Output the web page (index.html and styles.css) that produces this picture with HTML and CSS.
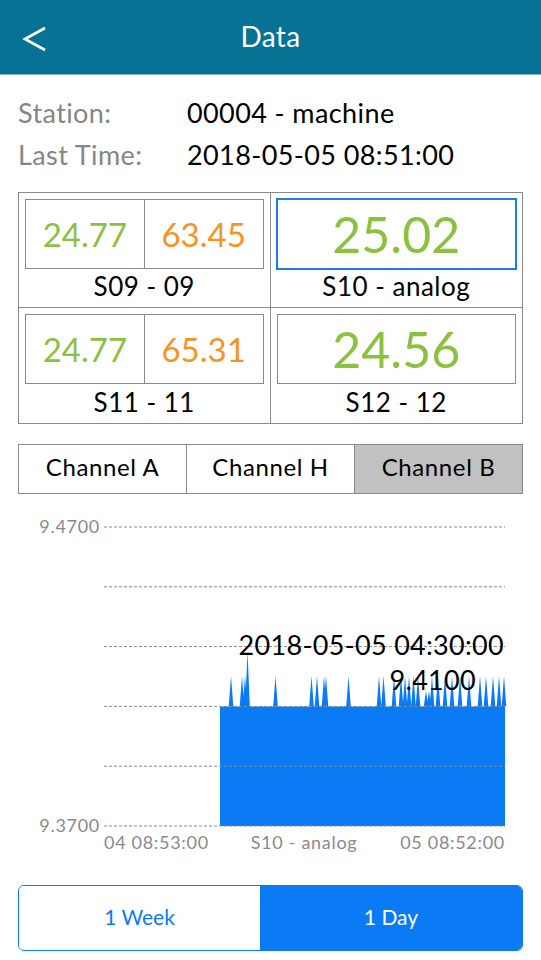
FILE: index.html
```html
<!DOCTYPE html>
<html lang="en">

<head>
    <meta name="viewport" content="width=device-width, initial-scale=1.0">
    <link rel="stylesheet" href="styles.css">
</head>

<body>
    <div class="header">
        <svg class="back" width="26" height="28" viewBox="0 0 26 28">
            <path d="M23 3 L3 14 L23 25" fill="none" stroke="white" stroke-width="2.7" />
        </svg>
        <p class="title">Data</p>
    </div>

    <div class="info">
        <div class="info-row">
            <span class="label">Station:</span>
            <span class="value">00004 - machine</span>
        </div>
        <div class="info-row">
            <span class="label">Last Time:</span>
            <span class="value">2018-05-05 08:51:00</span>
        </div>
    </div>

    <div class="sensors">
        <div class="cell">
            <div class="box split">
                <span class="num green">24.77</span>
                <span class="num orange">63.45</span>
            </div>
            <p class="name">S09 - 09</p>
        </div>
        <div class="cell">
            <div class="box selected">
                <span class="num big green">25.02</span>
            </div>
            <p class="name">S10 - analog</p>
        </div>
        <div class="cell">
            <div class="box split">
                <span class="num green">24.77</span>
                <span class="num orange">65.31</span>
            </div>
            <p class="name">S11 - 11</p>
        </div>
        <div class="cell">
            <div class="box">
                <span class="num big green">24.56</span>
            </div>
            <p class="name">S12 - 12</p>
        </div>
    </div>

    <div class="tabs">
        <button type="button" class="tab">Channel A</button>
        <button type="button" class="tab">Channel H</button>
        <button type="button" class="tab active">Channel B</button>
    </div>

    <div class="chart">
        <svg width="541" height="350" viewBox="0 0 541 350">
            <g class="grid">
                <line x1="104" y1="16" x2="505" y2="16" />
                <line x1="104" y1="75.8" x2="505" y2="75.8" />
                <line x1="104" y1="135.6" x2="505" y2="135.6" />
            </g>
            <path class="area" id="area" d="" />
            <line class="gridtop" x1="104" y1="195.4" x2="505" y2="195.4" />
            <line class="gridtop" x1="104" y1="255.2" x2="505" y2="255.2" />
            <line class="gridtop" x1="104" y1="315" x2="505" y2="315" />
            <text class="axis" x="100" y="22" text-anchor="end">9.4700</text>
            <text class="axis" x="100" y="321" text-anchor="end">9.3700</text>
            <text class="axis" x="104" y="338" text-anchor="start">04 08:53:00</text>
            <text class="axis" x="304" y="338" text-anchor="middle">S10 - analog</text>
            <text class="axis" x="505" y="338" text-anchor="end">05 08:52:00</text>
            <text class="tip" x="504" y="144" text-anchor="end">2018-05-05 04:30:00</text>
            <text class="tip" x="476" y="179" text-anchor="end">9.4100</text>
        </svg>
    </div>

    <div class="range">
        <button type="button" class="seg week">1 Week</button>
        <button type="button" class="seg on">1 Day</button>
    </div>

    <script>
        // spikes: [center x, peak y] in chart coords, base at 195.4
        var base = 195.4;
        var spikes = [
            [231, 165], [242, 165], [245, 165], [247.5, 140], [275.5, 165],
            [311.5, 165], [317, 165], [324, 165], [326, 165], [348.5, 165],
            [379, 165], [383.5, 165], [394, 165], [401, 165], [405, 165],
            [409, 165], [413.5, 165], [418, 165], [426, 180], [429, 180],
            [432, 165], [438, 165], [445, 165], [452, 165], [460, 165],
            [469, 165], [480, 165], [486, 165], [493, 165], [499, 165], [504, 165]
        ];
        var d = "M220 315 L220 " + base;
        spikes.forEach(function (s) {
            d += " L" + (s[0] - 2.3) + " " + base + " L" + s[0] + " " + s[1] + " L" + (s[0] + 2.3) + " " + base;
        });
        d += " L505 " + base + " L505 315 Z";
        document.getElementById("area").setAttribute("d", d);
    </script>
</body>

</html>
```

FILE: styles.css
```css
* {
    box-sizing: border-box;
}

body {
    margin: 0;
    width: 541px;
    font-family: Lato, "Open Sans", sans-serif;
    background-color: white;
    color: #000;
}

p {
    margin: 0;
}

div.header {
    height: 75px;
    background-color: #087295;
    border-bottom: 1px solid #7fb4c8;
    display: flex;
    align-items: center;
    justify-content: center;
    position: relative;
}

svg.back {
    position: absolute;
    left: 22px;
    top: 25px;
}

p.title {
    color: white;
    font-size: 28px;
    letter-spacing: 0.3px;
    margin-bottom: 2px;
}

div.info {
    padding: 16px 18px 0 18px;
}

div.info-row {
    display: flex;
    height: 42px;
    align-items: center;
    font-size: 27px;
    letter-spacing: 0.4px;
}

span.label {
    width: 169px;
    color: #868686;
}

div.sensors {
    margin: 17px 18px 0 18px;
    border: 1px solid #8a8a8a;
    display: grid;
    grid-template-columns: 1fr 1fr;
}

div.cell {
    height: 115px;
    padding: 6px 6px 0 6px;
    display: flex;
    flex-direction: column;
}

div.cell:nth-child(odd) {
    border-right: 1px solid #8a8a8a;
}

div.cell:nth-child(-n+2) {
    border-bottom: 1px solid #8a8a8a;
}

div.box {
    height: 70px;
    border: 1px solid #8a8a8a;
    display: flex;
    align-items: center;
    justify-content: center;
}

div.box.selected {
    border: 2px solid #1a7cf0;
    margin: -1px;
    height: 72px;
}

div.split > span {
    flex: 1;
    height: 100%;
    display: flex;
    align-items: center;
    justify-content: center;
}

div.split > span:first-child {
    border-right: 1px solid #8a8a8a;
}

span.num {
    font-size: 33px;
}

span.big {
    font-size: 50px;
}

.green {
    color: #8cc13f;
}

.orange {
    color: #f7941d;
}

p.name {
    flex: 1;
    display: flex;
    align-items: center;
    justify-content: center;
    font-size: 26px;
    letter-spacing: 0.5px;
    padding-bottom: 4px;
}

div.tabs {
    margin: 20px 18px 0 18px;
    display: flex;
    height: 50px;
    border: 1px solid #8a8a8a;
}

button.tab {
    flex: 1;
    border: none;
    border-right: 1px solid #8a8a8a;
    background-color: white;
    font-family: inherit;
    font-size: 24px;
    letter-spacing: 0.6px;
    color: #000;
    padding: 0 0 5px 0;
}

button.tab:last-child {
    border-right: none;
}

button.tab.active {
    background-color: #c1c1c1;
}

div.chart {
    margin-top: 17px;
    height: 350px;
}

div.chart svg {
    display: block;
}

g.grid line,
line.gridtop {
    stroke: #8a8a8a;
    stroke-width: 1;
    stroke-dasharray: 3 2;
}

path.area {
    fill: #0a7bf5;
}

text.axis {
    font-family: Lato, sans-serif;
    font-size: 18px;
    letter-spacing: 0.7px;
    fill: #8a8a8a;
}

text.tip {
    font-family: Lato, sans-serif;
    font-size: 27px;
    letter-spacing: 0.3px;
    fill: #000;
}

div.range {
    margin: 24px 18px 0 18px;
    height: 66px;
    display: flex;
    border: 1px solid #0a7bf5;
    border-radius: 6px;
    overflow: hidden;
}

button.seg {
    flex: 1;
    border: none;
    background-color: white;
    color: #0a7bf5;
    font-family: inherit;
    font-size: 21px;
    padding: 0 0 4px 0;
}

button.seg.week {
    flex: 0 0 241px;
}

button.seg.on {
    background-color: #0a7bf5;
    color: white;
}
```
